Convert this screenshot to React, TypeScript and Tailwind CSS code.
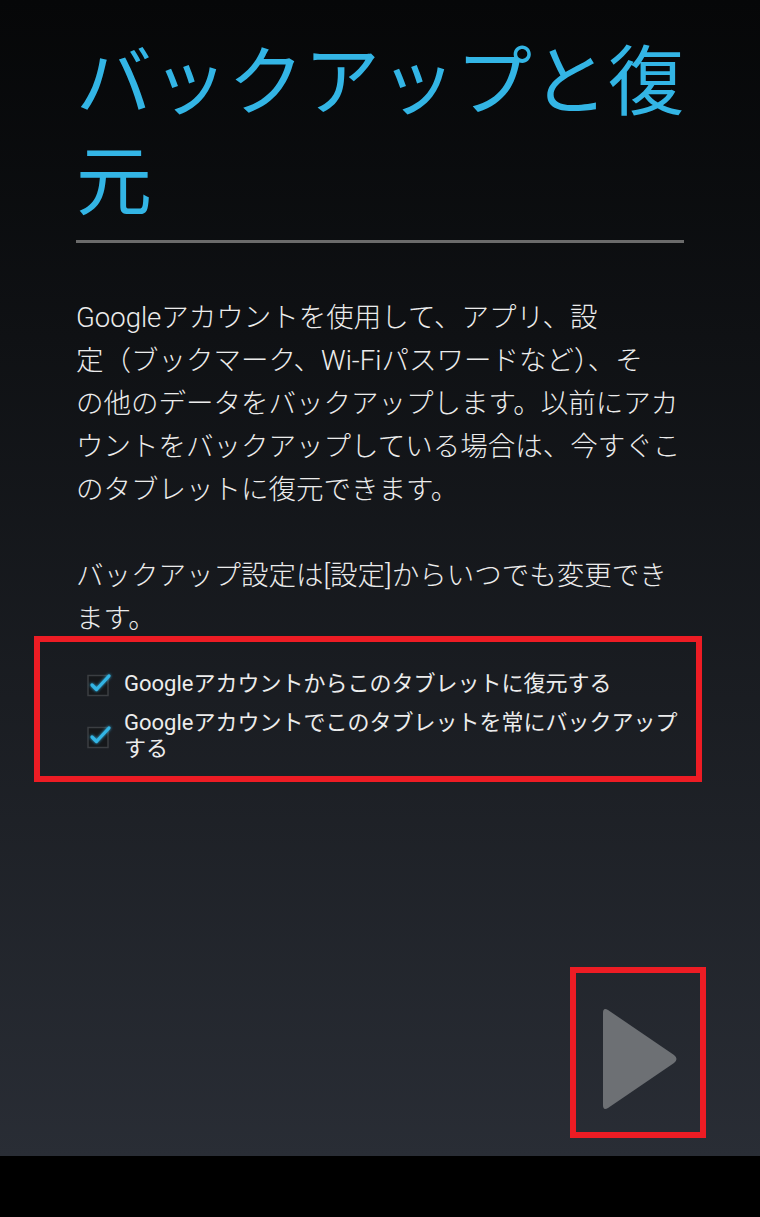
const font = { fontFamily: '"Roboto", "Noto Sans CJK JP", sans-serif' };

export default function App() {
  return (
    <div className="w-[760px] h-[1217px] flex flex-col bg-black overflow-hidden" style={font}>
      <main className="flex-1 flex flex-col bg-gradient-to-b from-[#060708] to-[#292d35]">
        <h1 className="ml-[76px] mt-[33px] text-[76px] leading-[100px] text-[#33b5e5] font-normal whitespace-nowrap">
          バックアップと復
          <br />
          元
        </h1>
        <div className="ml-[76px] mr-[76px] mt-[7px] h-[3px] bg-[#6b6b6b]" />

        <div className="ml-[76px] mt-[53px] text-[27.5px] leading-[43px] text-[#ececec] font-light whitespace-nowrap">
          <p>
            Googleアカウントを使用して、アプリ、設
            <br />
            定（ブックマーク、Wi-Fiパスワードなど）、そ
            <br />
            の他のデータをバックアップします。以前にアカ
            <br />
            ウントをバックアップしている場合は、今すぐこ
            <br />
            のタブレットに復元できます。
          </p>
          <p className="mt-[43px]">
            バックアップ設定は[設定]からいつでも変更でき
            <br />
            ます。
          </p>
        </div>

        <div className="ml-[34px] mr-[58px] mt-[-4px] border-[6px] border-[#ed1c24] pl-[46px] pr-2 pt-[29px] pb-[14px] flex flex-col gap-[13px]">
          <CheckRow lines={["Googleアカウントからこのタブレットに復元する"]} />
          <CheckRow lines={["Googleアカウントでこのタブレットを常にバックアップ", "する"]} />
        </div>

        <div className="flex-1" />

        <div className="self-end mr-[54px] mb-[18px] w-[136px] h-[171px] border-[6px] border-[#ed1c24] flex items-center justify-center">
          <svg width="80" height="104" viewBox="0 0 80 104" className="ml-[2px] mt-[12px]">
            <path
              d="M4 6 Q4 0 9 3 L75 48 Q80 52 75 56 L9 101 Q4 104 4 98 Z"
              fill="#6d7074"
            />
          </svg>
        </div>
      </main>
      <div className="h-[61px] bg-black" />
    </div>
  );
}

function CheckRow({ lines }: { lines: string[] }) {
  return (
    <div className="flex items-center gap-[12px]">
      <CheckBox />
      <div className="text-[22px] leading-[26px] text-[#ececec] whitespace-nowrap">
        {lines.map((l, i) => (
          <div key={i}>{l}</div>
        ))}
      </div>
    </div>
  );
}

function CheckBox() {
  return (
    <svg width="26" height="26" viewBox="0 0 26 26" className="shrink-0 overflow-visible">
      <defs>
        <filter id="glow" x="-50%" y="-50%" width="200%" height="200%">
          <feGaussianBlur stdDeviation="1.6" result="b" />
          <feMerge>
            <feMergeNode in="b" />
            <feMergeNode in="SourceGraphic" />
          </feMerge>
        </filter>
      </defs>
      <rect x="2" y="4.5" width="20" height="20" fill="#16181b" stroke="#3b3e42" strokeWidth="1.5" />
      <path
        d="M6 14 L10.5 18.5 L23 5"
        fill="none"
        stroke="#33b5e5"
        strokeWidth="3.2"
        strokeLinecap="round"
        strokeLinejoin="round"
        filter="url(#glow)"
      />
    </svg>
  );
}
